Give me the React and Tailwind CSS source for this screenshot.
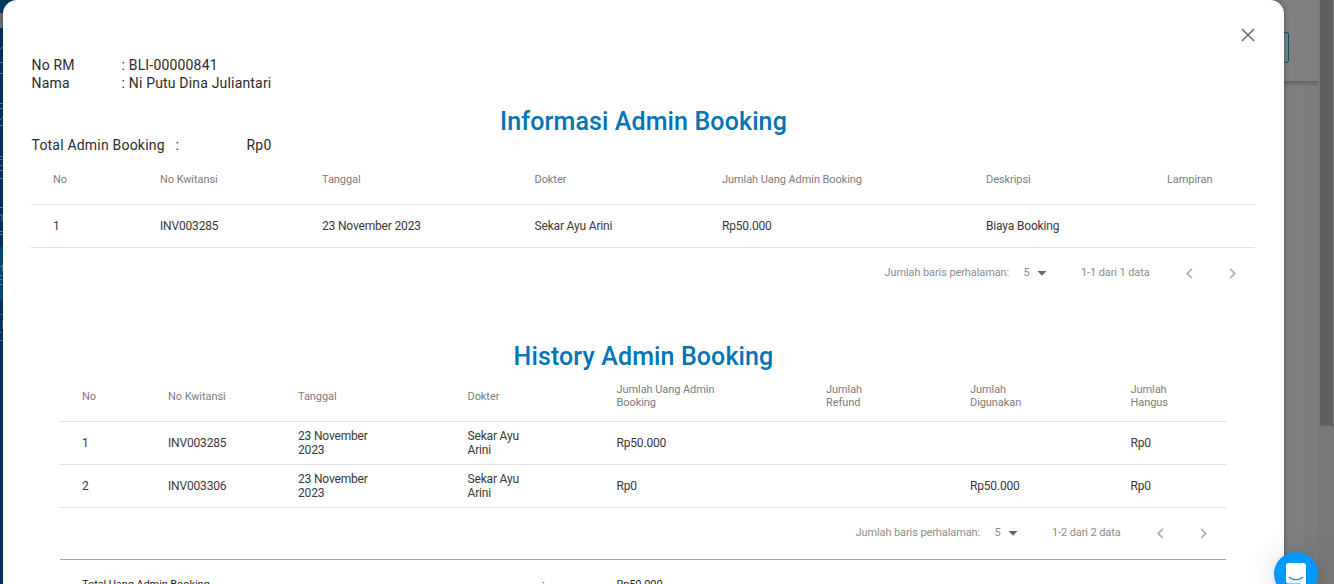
const infoCols = "grid grid-cols-[107px_162px_212.5px_187.5px_264px_181px_110px]";
const historyCols = "grid grid-cols-[86px_130px_169.5px_149px_209.5px_144px_160.5px_117.5px]";

const infoHead = ["No", "No Kwitansi", "Tanggal", "Dokter", "Jumlah Uang Admin Booking", "Deskripsi", "Lampiran"];
const infoRow = ["1", "INV003285", "23 November 2023", "Sekar Ayu Arini", "Rp50.000", "Biaya Booking", ""];

const historyHead = ["No", "No Kwitansi", "Tanggal", "Dokter", "Jumlah Uang Admin\nBooking", "Jumlah\nRefund", "Jumlah\nDigunakan", "Jumlah\nHangus"];
const historyRows = [
  ["1", "INV003285", "23 November\n2023", "Sekar Ayu\nArini", "Rp50.000", "", "", "Rp0"],
  ["2", "INV003306", "23 November\n2023", "Sekar Ayu\nArini", "Rp0", "", "Rp50.000", "Rp0"],
];

function Row({ cols, cells, className }) {
  return (
    <div className={`${cols} items-center border-b ${className}`}>
      {cells.map((c, i) => (
        <div key={i} className="whitespace-pre pl-[22px]">{c}</div>
      ))}
    </div>
  );
}

const headStyle = "border-[#e0e0e0] text-[11px] leading-[13px] tracking-[-0.07px] text-[#7c7c7c]";
const bodyStyle = "h-[43px] border-[#e0e0e0] text-[12px] leading-[14px] tracking-[-0.17px] text-[#383838]";

function Chevron({ d }) {
  return (
    <svg viewBox="0 0 24 24" className="size-[21px]" fill="#b0b0b0">
      <path d={d} />
    </svg>
  );
}

function Pagination({ range, className }) {
  return (
    <div className={`flex items-center justify-end pb-[2px] text-[11px] leading-[13px] tracking-[-0.1px] text-[#8c8c8c] ${className}`}>
      <span className="w-[139px]">Jumlah baris perhalaman:</span>
      <span className="w-[8px]">5</span>
      <svg viewBox="0 0 10 5" className="ml-[5px] h-[5px] w-[10px] translate-y-px" fill="#666">
        <path d="M0.5 0h9L5 4.8z" />
      </svg>
      <span className="ml-[34.5px] w-[97.5px]">{range}</span>
      <span className="w-[43px] pt-[2px]"><Chevron d="M15.41 7.41 14 6l-6 6 6 6 1.41-1.41L10.83 12z" /></span>
      <span className="pt-[2px]"><Chevron d="M10 6 8.59 7.41 13.17 12l-4.58 4.59L10 18l6-6z" /></span>
    </div>
  );
}

function Backdrop() {
  return (
    <div className="flex h-full w-full bg-[#7f7f7f]">
      <div className="flex w-[20px] flex-col bg-[#003460]">
        <div className="h-[13px] bg-[#003d68]" />
        <div className="h-[15px] w-[4px] bg-[#747474]" />
        <svg className="h-[219px] w-[4px]" viewBox="0 0 4 219" fill="none" stroke="#627f96">
          <path d="M0 21l3-2M0 34.5h3M0 45.5h3M0 75.5h3M0 80.5h3M0 92l3-3M0 97.5h3M0 128.5h3M0 131.5h3M0 137.5h2M0 142.5h3M0 150.5h3M0 179.5h3M0 188l2-2v8M0 203.5h3M0 206.5h3" />
        </svg>
        <svg className="h-[53px] w-[4px] bg-[#004d7d]" viewBox="0 0 4 53" fill="none" stroke="#58809a">
          <path d="M0 19.5h3M2.5 16v8M0 28.5h3M0 32.5h3M0 37.5h3" />
        </svg>
        <svg className="h-[45px] w-[4px]" viewBox="0 0 4 45" fill="none" stroke="#526879">
          <path d="M0 14.5h3M2.5 21v8M0 32.5h2M0 40.5h3" />
        </svg>
      </div>
      <div className="flex-1" />
      <div className="flex w-[54px] flex-col">
        <div className="flex h-[81px] flex-col bg-[#808080] pt-[32px]">
          <div className="h-[31px] w-[25px] rounded-r-[3px] border border-l-0 border-[#004f80]" />
        </div>
        <div className="flex flex-1">
          <div className="flex-1 bg-[#7f7f7f]">
            <div className="h-[6px] bg-gradient-to-b from-[#626262] to-[#7f7f7f]" />
          </div>
          <div className="w-[14px] bg-[#7a7c7f]">
            <div className="h-[6px] bg-gradient-to-b from-[#626262] to-[#7a7c7f]" />
          </div>
        </div>
      </div>
      <div className="w-[16px] bg-[#787878] pl-[2px] pr-px">
        <div className="h-[426px] bg-[#606060]" />
      </div>
    </div>
  );
}

export default function App() {
  return (
    <div className="relative h-[584px] w-[1334px] overflow-hidden font-['Roboto',sans-serif]">
      <Backdrop />

      <div className="absolute left-[3px] top-0 flex h-[600px] w-[1281px] flex-col rounded-t-[14px] bg-white shadow-[0_0_5px_rgba(0,0,0,0.4)]">
        <div className="flex h-[56px] justify-end pr-[24px] pt-[23px]">
          <svg viewBox="0 0 24 24" className="size-[24px]" fill="none" stroke="#707070" strokeWidth="1.700">
            <path d="M6 6l12 12M18 6L6 18" />
          </svg>
        </div>

        <div className="grid grid-cols-[90px_1fr] pl-[28.5px] text-[14px] leading-[18px] tracking-[0.18px] text-[#2b2b2b]">
          <span>No RM</span><span>: BLI-00000841</span>
          <span>Nama</span><span>: Ni Putu Dina Juliantari</span>
        </div>

        <h2 className="mt-[15px] text-center text-[25px] font-medium leading-[30px] tracking-[0.12px] text-[#0074b7]">Informasi Admin Booking</h2>

        <div className="-mt-px flex h-[18px] pl-[28.5px] text-[14px] leading-[18px] tracking-[0.2px] text-[#2b2b2b]">
          <span className="w-[144px]">Total Admin Booking</span>
          <span className="w-[71px]">:</span>
          <span>Rp0</span>
        </div>

        <div className="mx-[28px] w-[1224px]">
          <Row cols={infoCols} cells={infoHead} className={`h-[51px] ${headStyle}`} />
          <Row cols={infoCols} cells={infoRow} className={bodyStyle} />
          <Pagination range="1-1 dari 1 data" className="h-[51px] pr-[12.5px]" />
        </div>

        <h2 className="mt-[43px] text-center text-[25px] font-medium leading-[30px] tracking-[0.12px] text-[#0074b7]">History Admin Booking</h2>

        <div className="mx-[57px] -mt-px w-[1166px]">
          <Row cols={historyCols} cells={historyHead} className={`h-[51px] ${headStyle}`} />
          {historyRows.map((r) => (
            <Row key={r[0]} cols={historyCols} cells={r} className={bodyStyle} />
          ))}
          <Pagination range="1-2 dari 2 data" className="h-[52px] border-b border-[#a3a3a3] pr-[12.5px]" />
          <div className="flex pt-[18px] text-[11px] leading-[14px] tracking-[-0.09px] text-[#1f1f1f]">
            <span className="w-[482px] pl-[22px]">Total Uang Admin Booking</span>
            <span className="w-[74.5px]">:</span>
            <span>Rp50.000</span>
          </div>
        </div>
      </div>

      <div className="absolute left-[1274px] top-[552px] flex size-[44px] items-center justify-center rounded-full bg-[#0099ff] shadow-[0_1px_6px_rgba(0,0,0,0.06),0_2px_32px_rgba(0,0,0,0.16)]">
        <svg viewBox="0 0 28 32" className="h-[23px] w-[20px]" fill="white">
          <path d="M28 32s-4.714-1.855-8.527-3.340H3.437C1.540 28.660 0 27.026 0 25.013V3.644C0 1.633 1.540 0 3.437 0h21.125c1.898 0 3.437 1.632 3.437 3.645v18.404H28V32z" />
          <path d="M4.500 19.800c5.400 4.600 13.600 4.600 19 0" fill="none" stroke="#0099ff" strokeWidth="1.700" strokeLinecap="round" />
        </svg>
      </div>
    </div>
  );
}
